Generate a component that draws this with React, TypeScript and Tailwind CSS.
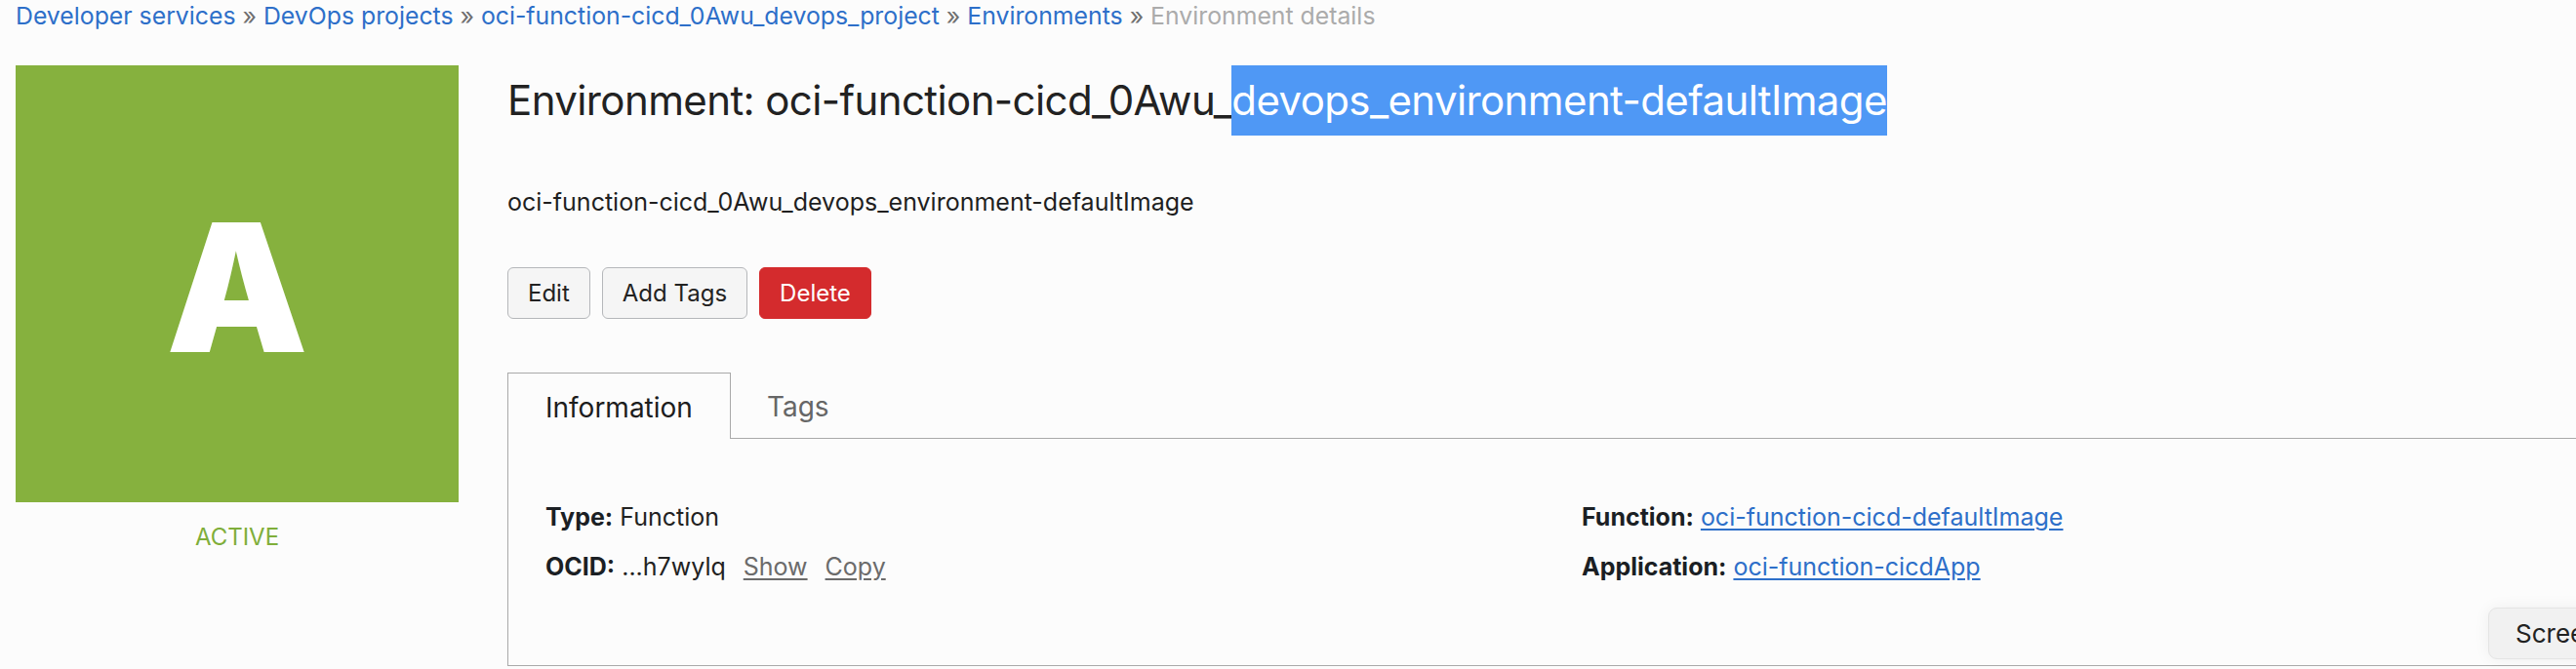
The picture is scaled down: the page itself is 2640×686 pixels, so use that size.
import React from 'react';

const crumbs = [
  'Developer services',
  'DevOps projects',
  'oci-function-cicd_0Awu_devops_project',
  'Environments',
];

export default function App() {
  return (
    <div className="relative w-[2640px] h-[686px] overflow-hidden bg-[#fcfcfc] text-[#1f1f1f] font-['Inter','Noto_Sans',sans-serif]">
      {/* breadcrumb */}
      <nav className="pl-[16px] text-[24.8px] leading-[32px] whitespace-nowrap">
        {crumbs.map(c => (
          <span key={c}>
            <a className="text-[#2d6fc9]">{c}</a>
            <span className="text-[#6f6f6f]"> » </span>
          </span>
        ))}
        <span className="text-[#ababab]">Environment details</span>
      </nav>

      <div className="flex mt-[35px]">
        {/* avatar */}
        <div className="ml-[16px] w-[454px] shrink-0 flex flex-col items-center">
          <div className="w-[454px] h-[448px] bg-[#86b13e] flex items-center justify-center">
            <span className="text-white text-[183px] leading-none font-black mt-[6px]">A</span>
          </div>
          <div className="mt-[20px] text-[24px] leading-[32px] text-[#7fae3a]">ACTIVE</div>
        </div>

        {/* details */}
        <div className="ml-[50px] flex-1 min-w-0">
          <h1 className="text-[42px] tracking-[-0.6px] leading-[72px] text-[#222] whitespace-nowrap">
            Environment: oci-function-cicd_0Awu_
            <span className="inline-block align-top h-[72px] bg-[#4f98f5] text-white">devops_environment-defaultImage</span>
          </h1>

          <p className="mt-[52px] text-[25px] leading-[32px] text-[#1f1f1f]">
            oci-function-cicd_0Awu_devops_environment-defaultImage
          </p>

          <div className="mt-[51px] flex gap-[12px]">
            <button className="h-[53px] px-[20px] border border-[#b5b7ba] bg-[#f5f5f5] rounded-[6px] text-[24px] text-[#222]">Edit</button>
            <button className="h-[53px] px-[20px] border border-[#b5b7ba] bg-[#f5f5f5] rounded-[6px] text-[24px] text-[#222]">Add Tags</button>
            <button className="h-[53px] px-[20px] border border-[#d42b2d] bg-[#d42b2d] rounded-[6px] text-[24px] text-white">Delete</button>
          </div>

          {/* tabs */}
          <div className="mt-[55px] w-[2400px]">
            <div className="flex h-[68px]">
              <div className="px-[38px] pt-[3px] flex items-center border border-b-0 border-[#a9a9a9] text-[28px] text-[#1d1d1d]">
                Information
              </div>
              <div className="flex-1 flex items-center pt-[3px] border-b border-[#a9a9a9]">
                <span className="pl-[37px] text-[28px] text-[#666]">Tags</span>
              </div>
            </div>
            <div className="h-[233px] border-l border-b border-[#a9a9a9] pl-[38px] pt-[64px]">
              <div className="grid grid-cols-[1062px_1fr] gap-y-[19px] text-[25px] leading-[32px] text-[#222]">
                <div>
                  <span className="font-bold text-[#1b1f24]">Type:</span> Function
                </div>
                <div>
                  <span className="font-bold text-[#1b1f24]">Function:</span>{' '}
                  <a className="text-[#2d6fc9] underline underline-offset-[3px]">oci-function-cicd-defaultImage</a>
                </div>
                <div>
                  <span className="font-bold text-[#1b1f24]">OCID:</span> ...h7wylq
                  <a className="ml-[18px] text-[#6b6b6b] underline underline-offset-[3px]">Show</a>
                  <a className="ml-[18px] text-[#6b6b6b] underline underline-offset-[3px]">Copy</a>
                </div>
                <div>
                  <span className="font-bold text-[#1b1f24]">Application:</span>{' '}
                  <a className="text-[#2d6fc9] underline underline-offset-[3px]">oci-function-cicdApp</a>
                </div>
              </div>
            </div>
          </div>
        </div>
      </div>

      {/* screenshot toolbar overlay */}
      <div className="absolute left-[2550px] top-[623px] h-[53px] pl-[27px] pr-[20px] flex items-center rounded-[9px] bg-[#f1f1f1] border border-[#e4e4e4] shadow-[0_0_16px_rgba(0,0,0,0.06)] text-[26px] text-[#222] whitespace-nowrap">
        Screenshot
      </div>
    </div>
  );
}
